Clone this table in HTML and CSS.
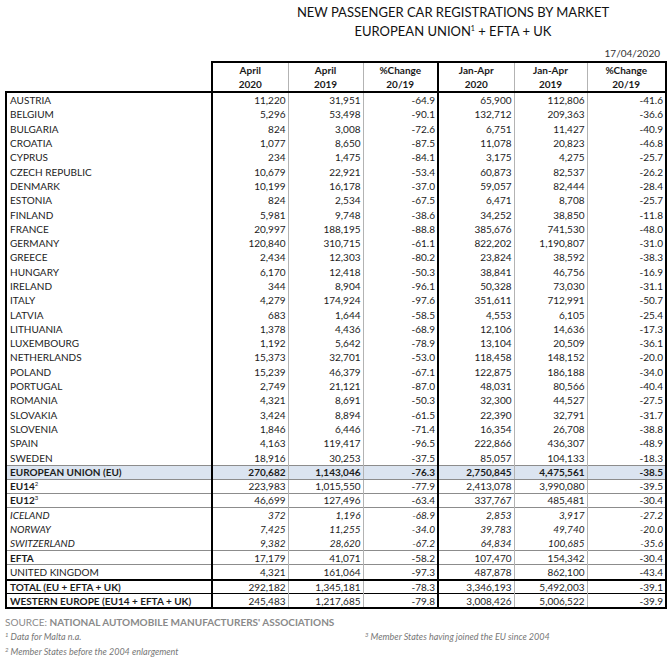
FILE: index.html
```html
<!DOCTYPE html>
<html>
<head>
<meta charset="utf-8">
<link rel="stylesheet" href="styles.css">
</head>
<body>
<div class="page">
  <div class="title">
    <div>NEW PASSENGER CAR REGISTRATIONS BY MARKET</div>
    <div>EUROPEAN UNION<sup>1</sup> + EFTA + UK</div>
  </div>
  <div class="date">17/04/2020</div>
  <table class="reg">
    <colgroup>
      <col class="w-label"><col class="w1"><col class="w2"><col class="w3"><col class="w4"><col class="w5"><col class="w6">
    </colgroup>
    <thead>
      <tr>
        <th class="blank"></th>
        <th class="c1">April<br>2020</th>
        <th class="c2">April<br>2019</th>
        <th class="c3">%Change<br>20/19</th>
        <th class="c4">Jan-Apr<br>2020</th>
        <th class="c5">Jan-Apr<br>2019</th>
        <th class="c6">%Change<br>20/19</th>
      </tr>
    </thead>
    <tbody>
      <tr class="first"><td class="lab">AUSTRIA</td><td class="c1">11,220</td><td class="c2">31,951</td><td class="c3">-64.9</td><td class="c4">65,900</td><td class="c5">112,806</td><td class="c6">-41.6</td></tr>
      <tr><td class="lab">BELGIUM</td><td class="c1">5,296</td><td class="c2">53,498</td><td class="c3">-90.1</td><td class="c4">132,712</td><td class="c5">209,363</td><td class="c6">-36.6</td></tr>
      <tr><td class="lab">BULGARIA</td><td class="c1">824</td><td class="c2">3,008</td><td class="c3">-72.6</td><td class="c4">6,751</td><td class="c5">11,427</td><td class="c6">-40.9</td></tr>
      <tr><td class="lab">CROATIA</td><td class="c1">1,077</td><td class="c2">8,650</td><td class="c3">-87.5</td><td class="c4">11,078</td><td class="c5">20,823</td><td class="c6">-46.8</td></tr>
      <tr><td class="lab">CYPRUS</td><td class="c1">234</td><td class="c2">1,475</td><td class="c3">-84.1</td><td class="c4">3,175</td><td class="c5">4,275</td><td class="c6">-25.7</td></tr>
      <tr><td class="lab">CZECH REPUBLIC</td><td class="c1">10,679</td><td class="c2">22,921</td><td class="c3">-53.4</td><td class="c4">60,873</td><td class="c5">82,537</td><td class="c6">-26.2</td></tr>
      <tr><td class="lab">DENMARK</td><td class="c1">10,199</td><td class="c2">16,178</td><td class="c3">-37.0</td><td class="c4">59,057</td><td class="c5">82,444</td><td class="c6">-28.4</td></tr>
      <tr><td class="lab">ESTONIA</td><td class="c1">824</td><td class="c2">2,534</td><td class="c3">-67.5</td><td class="c4">6,471</td><td class="c5">8,708</td><td class="c6">-25.7</td></tr>
      <tr><td class="lab">FINLAND</td><td class="c1">5,981</td><td class="c2">9,748</td><td class="c3">-38.6</td><td class="c4">34,252</td><td class="c5">38,850</td><td class="c6">-11.8</td></tr>
      <tr><td class="lab">FRANCE</td><td class="c1">20,997</td><td class="c2">188,195</td><td class="c3">-88.8</td><td class="c4">385,676</td><td class="c5">741,530</td><td class="c6">-48.0</td></tr>
      <tr><td class="lab">GERMANY</td><td class="c1">120,840</td><td class="c2">310,715</td><td class="c3">-61.1</td><td class="c4">822,202</td><td class="c5">1,190,807</td><td class="c6">-31.0</td></tr>
      <tr><td class="lab">GREECE</td><td class="c1">2,434</td><td class="c2">12,303</td><td class="c3">-80.2</td><td class="c4">23,824</td><td class="c5">38,592</td><td class="c6">-38.3</td></tr>
      <tr><td class="lab">HUNGARY</td><td class="c1">6,170</td><td class="c2">12,418</td><td class="c3">-50.3</td><td class="c4">38,841</td><td class="c5">46,756</td><td class="c6">-16.9</td></tr>
      <tr><td class="lab">IRELAND</td><td class="c1">344</td><td class="c2">8,904</td><td class="c3">-96.1</td><td class="c4">50,328</td><td class="c5">73,030</td><td class="c6">-31.1</td></tr>
      <tr><td class="lab">ITALY</td><td class="c1">4,279</td><td class="c2">174,924</td><td class="c3">-97.6</td><td class="c4">351,611</td><td class="c5">712,991</td><td class="c6">-50.7</td></tr>
      <tr><td class="lab">LATVIA</td><td class="c1">683</td><td class="c2">1,644</td><td class="c3">-58.5</td><td class="c4">4,553</td><td class="c5">6,105</td><td class="c6">-25.4</td></tr>
      <tr><td class="lab">LITHUANIA</td><td class="c1">1,378</td><td class="c2">4,436</td><td class="c3">-68.9</td><td class="c4">12,106</td><td class="c5">14,636</td><td class="c6">-17.3</td></tr>
      <tr><td class="lab">LUXEMBOURG</td><td class="c1">1,192</td><td class="c2">5,642</td><td class="c3">-78.9</td><td class="c4">13,104</td><td class="c5">20,509</td><td class="c6">-36.1</td></tr>
      <tr><td class="lab">NETHERLANDS</td><td class="c1">15,373</td><td class="c2">32,701</td><td class="c3">-53.0</td><td class="c4">118,458</td><td class="c5">148,152</td><td class="c6">-20.0</td></tr>
      <tr><td class="lab">POLAND</td><td class="c1">15,239</td><td class="c2">46,379</td><td class="c3">-67.1</td><td class="c4">122,875</td><td class="c5">186,188</td><td class="c6">-34.0</td></tr>
      <tr><td class="lab">PORTUGAL</td><td class="c1">2,749</td><td class="c2">21,121</td><td class="c3">-87.0</td><td class="c4">48,031</td><td class="c5">80,566</td><td class="c6">-40.4</td></tr>
      <tr><td class="lab">ROMANIA</td><td class="c1">4,321</td><td class="c2">8,691</td><td class="c3">-50.3</td><td class="c4">32,300</td><td class="c5">44,527</td><td class="c6">-27.5</td></tr>
      <tr><td class="lab">SLOVAKIA</td><td class="c1">3,424</td><td class="c2">8,894</td><td class="c3">-61.5</td><td class="c4">22,390</td><td class="c5">32,791</td><td class="c6">-31.7</td></tr>
      <tr><td class="lab">SLOVENIA</td><td class="c1">1,846</td><td class="c2">6,446</td><td class="c3">-71.4</td><td class="c4">16,354</td><td class="c5">26,708</td><td class="c6">-38.8</td></tr>
      <tr><td class="lab">SPAIN</td><td class="c1">4,163</td><td class="c2">119,417</td><td class="c3">-96.5</td><td class="c4">222,866</td><td class="c5">436,307</td><td class="c6">-48.9</td></tr>
      <tr><td class="lab">SWEDEN</td><td class="c1">18,916</td><td class="c2">30,253</td><td class="c3">-37.5</td><td class="c4">85,057</td><td class="c5">104,133</td><td class="c6">-18.3</td></tr>
      <tr class="eu line"><td class="lab">EUROPEAN UNION (EU)</td><td class="c1">270,682</td><td class="c2">1,143,046</td><td class="c3">-76.3</td><td class="c4">2,750,845</td><td class="c5">4,475,561</td><td class="c6">-38.5</td></tr>
      <tr class="line"><td class="lab bold">EU14<sup>2</sup></td><td class="c1">223,983</td><td class="c2">1,015,550</td><td class="c3">-77.9</td><td class="c4">2,413,078</td><td class="c5">3,990,080</td><td class="c6">-39.5</td></tr>
      <tr class="line"><td class="lab bold">EU12<sup>3</sup></td><td class="c1">46,699</td><td class="c2">127,496</td><td class="c3">-63.4</td><td class="c4">337,767</td><td class="c5">485,481</td><td class="c6">-30.4</td></tr>
      <tr class="line ital"><td class="lab">ICELAND</td><td class="c1">372</td><td class="c2">1,196</td><td class="c3">-68.9</td><td class="c4">2,853</td><td class="c5">3,917</td><td class="c6">-27.2</td></tr>
      <tr class="ital"><td class="lab">NORWAY</td><td class="c1">7,425</td><td class="c2">11,255</td><td class="c3">-34.0</td><td class="c4">39,783</td><td class="c5">49,740</td><td class="c6">-20.0</td></tr>
      <tr class="ital"><td class="lab">SWITZERLAND</td><td class="c1">9,382</td><td class="c2">28,620</td><td class="c3">-67.2</td><td class="c4">64,834</td><td class="c5">100,685</td><td class="c6">-35.6</td></tr>
      <tr class="line"><td class="lab bold">EFTA</td><td class="c1">17,179</td><td class="c2">41,071</td><td class="c3">-58.2</td><td class="c4">107,470</td><td class="c5">154,342</td><td class="c6">-30.4</td></tr>
      <tr class="line"><td class="lab">UNITED KINGDOM</td><td class="c1">4,321</td><td class="c2">161,064</td><td class="c3">-97.3</td><td class="c4">487,878</td><td class="c5">862,100</td><td class="c6">-43.4</td></tr>
      <tr class="thick"><td class="lab bold">TOTAL (EU + EFTA + UK)</td><td class="c1">292,182</td><td class="c2">1,345,181</td><td class="c3">-78.3</td><td class="c4">3,346,193</td><td class="c5">5,492,003</td><td class="c6">-39.1</td></tr>
      <tr class="dark last"><td class="lab bold">WESTERN EUROPE (EU14 + EFTA + UK)</td><td class="c1">245,483</td><td class="c2">1,217,685</td><td class="c3">-79.8</td><td class="c4">3,008,426</td><td class="c5">5,006,522</td><td class="c6">-39.9</td></tr>
    </tbody>
  </table>
  <div class="source"><span class="src-label">SOURCE:</span> <span class="src-name">NATIONAL AUTOMOBILE MANUFACTURERS' ASSOCIATIONS</span></div>
  <div class="notes">
    <div class="note-row">
      <span class="note note-left"><sup>1</sup> Data for Malta n.a.</span>
      <span class="note"><sup>3</sup> Member States having joined the EU since 2004</span>
    </div>
    <div class="note-row">
      <span class="note"><sup>2</sup> Member States before the 2004 enlargement</span>
    </div>
  </div>
</div>
</body>
</html>
```

FILE: styles.css
```css
html, body {
  margin: 0;
  padding: 0;
  background: #ffffff;
}

.page {
  width: 670px;
  height: 662px;
  font-family: Lato, "Liberation Sans", sans-serif;
  color: #1c1c1c;
  overflow: hidden;
}

.title {
  padding-top: 3px;
  padding-left: 236px;
  text-align: center;
  font-size: 13px;
  line-height: 19px;
  color: #111;
}

.title sup {
  font-size: 7px;
  line-height: 0;
  vertical-align: 5px;
}

.date {
  margin-top: 5px;
  padding-right: 10px;
  text-align: right;
  font-size: 10px;
  line-height: 14px;
  color: #333;
}

.reg {
  margin-left: 5px;
  margin-top: 1px;
  width: 660px;
  table-layout: fixed;
  border-collapse: collapse;
  font-size: 10px;
}

.w-label { width: 206px; }
.w1 { width: 76px; }
.w2 { width: 75px; }
.w3 { width: 75px; }
.w4 { width: 76px; }
.w5 { width: 73px; }
.w6 { width: 79px; }

.reg th {
  font-weight: 700;
  text-align: center;
  line-height: 14px;
  height: 28px;
  padding: 0;
  border-top: 2px solid #000;
  color: #1a1a1a;
}

.reg th.blank {
  border: none;
}

.reg td {
  padding: 0 2px 0 0;
  height: 14.3px;
  line-height: 12px;
  text-align: right;
  white-space: nowrap;
  overflow: hidden;
}

.reg td.lab {
  text-align: left;
  padding: 0 0 0 3px;
  border-left: 2px solid #000;
}

.reg .c1, .reg .c4 { border-left: 2px solid #000; }
.reg .c2, .reg .c3, .reg .c5, .reg .c6 { border-left: 1px solid #b3b3b3; }
.reg .c6 { border-right: 2px solid #000; }

.reg tr.first td { border-top: 2px solid #000; }

.reg tr.line td { border-top: 1px solid #8c8c8c; height: 13.3px; }
.reg tr.thick td { border-top: 2px solid #000; height: 12.8px; }
.reg tr.dark td { border-top: 1px solid #000; }
.reg tr.last td { border-bottom: 2px solid #000; height: 12.3px; }

.reg tr.eu td {
  background: #dbe4f0;
  font-weight: 700;
  border-bottom: 1px solid #8c8c8c;
  height: 12.8px;
}

.reg tr.ital td { font-style: italic; }

.reg td.bold { font-weight: 700; }

.reg sup {
  font-size: 6px;
  line-height: 0;
  vertical-align: 4px;
  font-weight: 400;
}

.source {
  margin-top: 6px;
  padding-left: 5px;
  font-size: 10px;
  line-height: 14px;
  color: #8a8a8a;
}

.src-name { font-weight: 700; }

.notes {
  padding-left: 5px;
  font-size: 9px;
  font-style: italic;
  color: #777;
}

.note-row {
  display: flex;
  height: 15px;
  align-items: center;
}

.note { white-space: nowrap; }

.note-left { width: 360px; }

.notes sup {
  font-size: 6px;
  line-height: 0;
  vertical-align: 3px;
}
```
